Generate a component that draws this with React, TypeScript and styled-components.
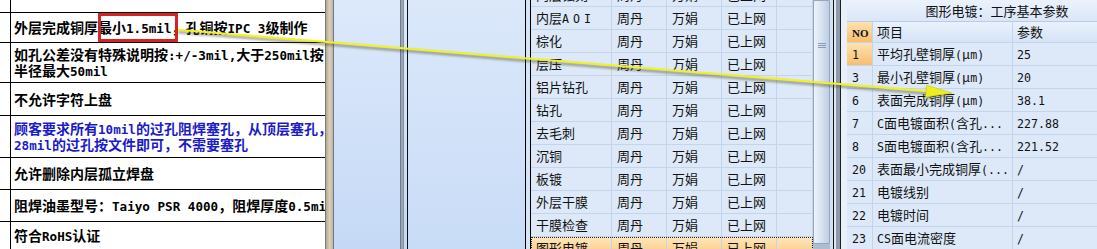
import React from "react";
import styled, { createGlobalStyle } from "styled-components";

const GlobalStyle = createGlobalStyle`
  html, body {
    margin: 0;
    padding: 0;
    background: #fff;
    overflow: hidden;
  }
  body {
    font-family: "Noto Sans CJK SC", "Noto Sans", sans-serif;
  }
`;

const Page = styled.div`
  position: relative;
  display: flex;
  width: 1097px;
  height: 249px;
  overflow: hidden;
`;

/* ---------- left: notes sheet ---------- */

const NotesPanel = styled.div`
  width: 326px;
  flex-shrink: 0;
  box-sizing: border-box;
  border-right: 1px solid #7a7a7a;
  background: #fff;
  overflow: hidden;
  display: flex;
  flex-direction: column;
`;

const NoteRow = styled.div<{ $h?: number }>`
  display: grid;
  grid-template-columns: 11px 1fr;
  box-sizing: border-box;
  min-height: 0;
  flex: ${(p) => (p.$h ? `0 0 ${p.$h}px` : "1 1 auto")};
  border-bottom: ${(p) => (p.$h ? "1px solid #000" : "none")};
`;

const NoteIndex = styled.div`
  border-right: 1px solid #000;
`;

const NoteText = styled.div<{ $blue?: boolean }>`
  display: flex;
  flex-direction: column;
  justify-content: center;
  padding-left: 3px;
  font-size: 14px;
  font-weight: 700;
  line-height: 15px;
  white-space: nowrap;
  overflow: hidden;
  color: ${(p) => (p.$blue ? "#1c1cc6" : "#000")};
`;

const Mark = styled.span`
  position: relative;
  display: inline-block;
  &::after {
    content: "";
    position: absolute;
    left: 0;
    right: -6px;
    top: -7px;
    bottom: -7px;
    border: 3px solid #d42424;
  }
`;

const Latin = styled.span<{ $size: number; $spacing?: number }>`
  font-family: "DejaVu Sans Mono", "Liberation Mono", monospace;
  font-size: ${(p) => p.$size}px;
  line-height: 1;
  letter-spacing: ${(p) => p.$spacing || 0}px;
`;

const mix = (text: string, size: number) =>
  text.split(/([\x20-\x7e]+)/).map((part, i) =>
    /^[\x20-\x7e]+$/.test(part) ? (
      <Latin key={i} $size={size}>
        {part}
      </Latin>
    ) : (
      part
    )
  );

/* ---------- middle: panes ---------- */

const Splitter = styled.div`
  width: 7px;
  flex-shrink: 0;
  background: linear-gradient(to right, #b3a78f, #d9cfbb 50%, #c2b69f);
  border-right: 1px solid #6b7889;
`;

const Workspace = styled.div`
  display: flex;
  flex-shrink: 0;
  background: linear-gradient(to bottom, #dde9fb, #c5d9f6);
`;

const NavPane = styled.div`
  width: 66px;
`;

const Sash = styled.div`
  width: 4px;
  box-sizing: border-box;
  background: #9ba7b6;
  border-left: 1px solid #6f7b8a;
  border-right: 1px solid #848f9d;
`;

const ListPane = styled.div`
  width: 117px;
  margin-left: 3px;
  border-left: 1px solid #111;
  background: linear-gradient(to bottom, #dbe8fa, #c9dcf7);
`;

const ProcessFrame = styled.div`
  display: flex;
  border-left: 1px solid #000;
  padding-left: 4px;
  background: #d6e4f8;
`;

const ProcessGrid = styled.div`
  width: 282px;
  border-left: 1px solid #000;
  background: #dde9f9;
  overflow: hidden;
  display: flex;
  flex-direction: column;
`;

const ProcessRow = styled.div<{ $selected?: boolean; $first?: boolean }>`
  display: grid;
  grid-template-columns: 81px 55px 55px 55px 36px;
  flex: 0 0 23px;
  height: 23px;
  min-height: 0;
  box-sizing: border-box;
  margin-top: ${(p) => (p.$first ? "-16px" : "0")};
  border-bottom: 1px solid #c3d4eb;
  background: ${(p) =>
    p.$selected ? "linear-gradient(to bottom, #fee6bd, #fbc475)" : "transparent"};
  outline: ${(p) => (p.$selected ? "1px dotted #222" : "none")};
  outline-offset: -1px;
`;

const Cell = styled.div`
  box-sizing: border-box;
  padding-left: 5px;
  border-right: 1px solid #c3d4eb;
  font-size: 13px;
  line-height: 22px;
  color: #111;
  white-space: nowrap;
  overflow: hidden;
`;

const ScrollTrack = styled.div`
  width: 17px;
  flex-shrink: 0;
  background: #aebdd2;
  display: flex;
  flex-direction: column;
`;

const ScrollThumb = styled.div`
  height: 244px;
  box-sizing: border-box;
  border: 1px solid #93a6c2;
  border-radius: 2px;
  background: linear-gradient(to right, #eef3fa, #d2deee 60%, #bfcee4);
  display: flex;
  flex-direction: column;
  align-items: center;
  padding-top: 42px;
  gap: 1px;
`;

const GripLine = styled.div`
  width: 8px;
  height: 1px;
  background: #8a9bb4;
`;

const FrameEdge = styled.div`
  width: 17px;
  flex-shrink: 0;
  background: linear-gradient(
    to right,
    #d5e1f1 0 3px,
    #111 3px 4px,
    #e0e8f2 4px 6px,
    #8e9aa9 6px 10px,
    #1e1e1e 10px 11px,
    #e9f0fa 11px 17px
  );
`;

/* ---------- right: parameter grid ---------- */

const ParamPanel = styled.div`
  width: 300px;
  flex-shrink: 0;
  background: #dde9f9;
  display: flex;
  flex-direction: column;
`;

const ParamTitle = styled.div`
  flex: 0 0 22px;
  box-sizing: border-box;
  border-bottom: 1px solid #b9cce6;
  background: linear-gradient(to bottom, #ebf2fc, #dae6f8);
  text-align: center;
  font-size: 13px;
  line-height: 21px;
  color: #111;
`;

const ParamRow = styled.div<{ $header?: boolean }>`
  display: grid;
  grid-template-columns: 26px 140px 134px;
  flex: 0 0 ${(p) => (p.$header ? 21 : 23)}px;
  height: ${(p) => (p.$header ? 21 : 23)}px;
  min-height: 0;
  box-sizing: border-box;
  border-bottom: 1px solid #c3d4eb;
  line-height: ${(p) => (p.$header ? 20 : 22)}px;
`;

const ParamCell = styled.div<{ $tone?: "orange" | "head" | "plain"; $pad?: number }>`
  box-sizing: border-box;
  padding-left: ${(p) => p.$pad ?? 4}px;
  border-right: 1px solid #c3d4eb;
  font-size: 13px;
  color: #111;
  white-space: nowrap;
  overflow: hidden;
  background: ${(p) =>
    p.$tone === "orange"
      ? "linear-gradient(to bottom, #fde2b2, #f8bf6c)"
      : p.$tone === "head"
      ? "linear-gradient(to bottom, #e9f1fc, #d6e4f7)"
      : "transparent"};
`;

const NoLabel = styled.span`
  font-family: "Liberation Serif", serif;
  font-weight: 700;
  font-size: 11px;
`;

const Overlay = styled.svg`
  position: absolute;
  left: 0;
  top: 0;
  pointer-events: none;
`;

const processes = [
  "内层蚀刻",
  "内层AOI",
  "棕化",
  "层压",
  "铝片钻孔",
  "钻孔",
  "去毛刺",
  "沉铜",
  "板镀",
  "外层干膜",
  "干膜检查",
  "图形电镀",
];

const params: [string, string, string][] = [
  ["1", "平均孔壁铜厚(μm)", "25"],
  ["3", "最小孔壁铜厚(μm)", "20"],
  ["6", "表面完成铜厚(μm)", "38.1"],
  ["7", "C面电镀面积(含孔...", "227.88"],
  ["8", "S面电镀面积(含孔...", "221.52"],
  ["20", "表面最小完成铜厚(...", "/"],
  ["21", "电镀线别", "/"],
  ["22", "电镀时间", "/"],
  ["23", "CS面电流密度", "/"],
];

const L = 12.6;
const S = 11.6;

const App = () => {
  return (
    <>
      <GlobalStyle />
      <Page>
        <NotesPanel>
          <NoteRow $h={13}>
            <NoteIndex />
            <NoteText />
          </NoteRow>
          <NoteRow $h={30}>
            <NoteIndex />
            <NoteText>
              <div>
                外层完成铜厚<Mark>最小{mix("1.5mil", L)}</Mark>，孔铜按{mix("IPC 3", L)}级制作
              </div>
            </NoteText>
          </NoteRow>
          <NoteRow $h={40}>
            <NoteIndex />
            <NoteText>
              <div>{mix("如孔公差没有特殊说明按:+/-3mil,大于250mil按", L)}</div>
              <div>{mix("半径最大50mil", L)}</div>
            </NoteText>
          </NoteRow>
          <NoteRow $h={33}>
            <NoteIndex />
            <NoteText>
              <div>不允许字符上盘</div>
            </NoteText>
          </NoteRow>
          <NoteRow $h={42}>
            <NoteIndex />
            <NoteText $blue>
              <div>{mix("顾客要求所有10mil的过孔阻焊塞孔，从顶层塞孔，小于", L)}</div>
              <div>{mix("28mil的过孔按文件即可，不需要塞孔", L)}</div>
            </NoteText>
          </NoteRow>
          <NoteRow $h={32}>
            <NoteIndex />
            <NoteText>
              <div>允许删除内层孤立焊盘</div>
            </NoteText>
          </NoteRow>
          <NoteRow $h={32}>
            <NoteIndex />
            <NoteText>
              <div>{mix("阻焊油墨型号：Taiyo PSR 4000，阻焊厚度0.5mil", L)}</div>
            </NoteText>
          </NoteRow>
          <NoteRow>
            <NoteIndex />
            <NoteText>
              <div>{mix("符合RoHS认证", L)}</div>
            </NoteText>
          </NoteRow>
        </NotesPanel>

        <Splitter />

        <Workspace>
          <NavPane />
          <Sash />
          <ListPane />
          <ProcessFrame>
            <ProcessGrid>
              {processes.map((name, i) => (
                <ProcessRow
                  key={name}
                  $first={i === 0}
                  $selected={i === processes.length - 1}
                >
                  <Cell>
                    {name === "内层AOI" ? (
                      <>
                        内层
                        <Latin $size={S} $spacing={4}>
                          AOI
                        </Latin>
                      </>
                    ) : (
                      name
                    )}
                  </Cell>
                  <Cell>周丹</Cell>
                  <Cell>万娟</Cell>
                  <Cell>已上网</Cell>
                  <Cell />
                </ProcessRow>
              ))}
            </ProcessGrid>
            <ScrollTrack>
              <ScrollThumb>
                <GripLine />
                <GripLine />
                <GripLine />
              </ScrollThumb>
            </ScrollTrack>
          </ProcessFrame>
          <FrameEdge />
        </Workspace>

        <ParamPanel>
          <ParamTitle>图形电镀：工序基本参数</ParamTitle>
          <ParamRow $header>
            <ParamCell $tone="orange" $pad={5}>
              <NoLabel>NO</NoLabel>
            </ParamCell>
            <ParamCell $tone="head">项目</ParamCell>
            <ParamCell $tone="head">参数</ParamCell>
          </ParamRow>
          {params.map(([no, item, value], i) => (
            <ParamRow key={no}>
              <ParamCell $tone={i === 0 ? "orange" : "plain"} $pad={5}>
                {mix(no, S)}
              </ParamCell>
              <ParamCell>{mix(item, S)}</ParamCell>
              <ParamCell>{mix(value, S)}</ParamCell>
            </ParamRow>
          ))}
        </ParamPanel>

        <Overlay width={1097} height={249} viewBox="0 0 1097 249">
          <defs>
            <filter id="soft" x="-5%" y="-50%" width="110%" height="200%">
              <feGaussianBlur stdDeviation="1.2" />
            </filter>
          </defs>
          <line
            x1={178}
            y1={32}
            x2={928}
            y2={93.5}
            stroke="rgba(70,70,40,0.45)"
            strokeWidth={3}
            filter="url(#soft)"
          />
          <polygon
            points="953,95.5 926.6,87.4 925.6,99.4"
            fill="rgba(70,70,40,0.4)"
            filter="url(#soft)"
          />
          <line x1={178} y1={29.8} x2={928} y2={91.3} stroke="#f2f21c" strokeWidth={2} />
          <polygon points="952,93 926.6,85.2 925.6,97.2" fill="#eeee1e" stroke="#c8c814" strokeWidth={0.6} />
        </Overlay>
      </Page>
    </>
  );
};

export default App;
